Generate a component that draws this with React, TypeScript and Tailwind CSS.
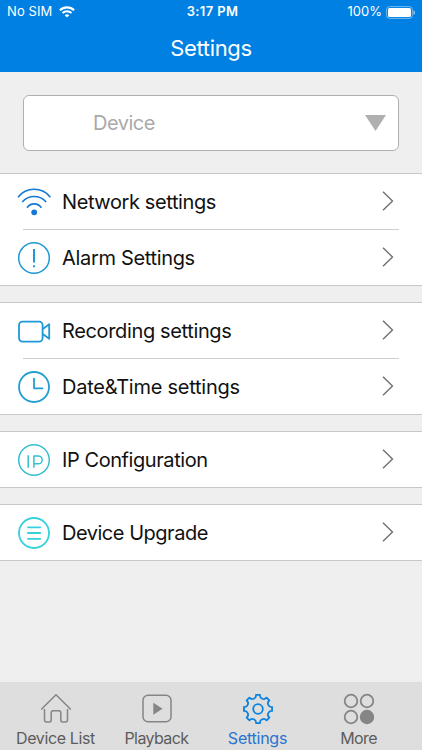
import type { ReactNode } from 'react';

const blue = '#0a82df';

function StatusBar() {
  return (
    <div className="flex h-6 items-center text-[13px] text-white">
      <div className="flex flex-1 items-center gap-[7px] pl-[7px]">
        <span className="tracking-[0.1px]">No SIM</span>
        <svg width="16" height="12" viewBox="0 0 16 12" fill="none" stroke="white" strokeWidth="2.1">
          <path d="M0.9 4.3a10.2 10.2 0 0 1 14.2 0" />
          <path d="M3.5 7a6.5 6.5 0 0 1 9 0" />
          <path d="M8 11.6L5.7 9.2a3.4 3.4 0 0 1 4.6 0Z" fill="white" stroke="none" />
        </svg>
      </div>
      <span className="ml-[3px] font-semibold tracking-[0.35px]">3:17 PM</span>
      <div className="flex flex-1 items-center justify-end gap-1 pr-[7px]">
        <span className="tracking-[0px]">100%</span>
        <svg width="29" height="13" viewBox="0 0 29 13">
          <rect x="0.6" y="0.6" width="25.8" height="11.8" rx="3" fill="none" stroke="white" strokeOpacity="0.45" />
          <rect x="2" y="2" width="23" height="9" rx="1.6" fill="white" />
          <path d="M27.4 4.5v4a2 2 0 0 0 0-4Z" fill="white" fillOpacity="0.5" />
        </svg>
      </div>
    </div>
  );
}

const icons: Record<string, ReactNode> = {
  network: (
    <g stroke="#1478d4" strokeWidth="1.6">
      <path d="M2 13.2a20.6 20.6 0 0 1 32.4 0" />
      <path d="M6.2 18a15.8 15.8 0 0 1 24 0" />
      <path d="M11 23.8a8.6 8.6 0 0 1 14.4 0" />
      <circle cx="18.2" cy="28.3" r="2.9" fill="#1478d4" stroke="none" />
    </g>
  ),
  alarm: (
    <g stroke="#2098d6">
      <circle cx="18" cy="18" r="15.3" />
      <path d="M18 9v13.6" strokeWidth="2" />
      <path d="M18 25.3v2" strokeWidth="2" />
    </g>
  ),
  recording: (
    <g stroke="#2099d9" strokeWidth="1.8">
      <rect x="3" y="8.6" width="23.6" height="20" rx="3.5" />
      <path d="M26.8 16L33.2 11.2v14.6l-6.4-4.8" />
    </g>
  ),
  date: (
    <g stroke="#229fd0" strokeWidth="1.8">
      <circle cx="18" cy="18" r="15" />
      <path d="M18 9v10.3h9.2" />
    </g>
  ),
  ip: (
    <g stroke="#34bfd2">
      <circle cx="18" cy="18" r="15.3" />
      <path d="M12.2 13.3v12.4M17.9 25.7V14h4.4a3.9 3.9 0 0 1 0 7.8h-4.4" />
    </g>
  ),
  upgrade: (
    <g stroke="#35d2db" strokeWidth="1.8">
      <circle cx="18" cy="18" r="15" />
      <path d="M11.3 12.3h13.6M11.3 18h13.6M11.3 23.8h13.6" />
    </g>
  ),
};

// Each inner list is one white block
const groups = [
  [
    { icon: 'network', label: 'Network settings', spacing: 'tracking-[-0.4px]' },
    { icon: 'alarm', label: 'Alarm Settings', spacing: 'tracking-[-0.33px]' },
  ],
  [
    { icon: 'recording', label: 'Recording settings', spacing: 'tracking-[-0.36px]' },
    { icon: 'date', label: 'Date&Time settings', spacing: 'tracking-[-0.25px]' },
  ],
  [{ icon: 'ip', label: 'IP Configuration', spacing: 'tracking-[-0.43px]' }],
  [{ icon: 'upgrade', label: 'Device Upgrade', spacing: 'tracking-[-0.48px]' }],
];

function Row({ icon, label, spacing }: { icon: string; label: string; spacing: string }) {
  return (
    <div className="flex h-[55px] items-center pl-4 pr-[28px]">
      <svg width="36" height="36" viewBox="0 0 36 36" fill="none" strokeWidth="1.5" strokeLinejoin="round">
        {icons[icon]}
      </svg>
      <span className={`ml-[10px] flex-1 text-[20px] leading-6 text-[#111] ${spacing}`}>{label}</span>
      <svg className="mb-px" width="12" height="20" viewBox="0 0 12 20" fill="none" stroke="#707070" strokeWidth="1.4">
        <path d="M1 0.7L10.5 10L1 19.3" />
      </svg>
    </div>
  );
}

// Eight teeth with a round notch between each pair
const gearPath = (() => {
  const at = (deg: number) => {
    const a = (deg * Math.PI) / 180;
    return `${(16 + 14.2 * Math.sin(a)).toFixed(2)} ${(16 - 14.2 * Math.cos(a)).toFixed(2)}`;
  };
  let d = `M${at(-8)}`;
  for (let i = 0; i < 8; i++) {
    d += `L${at(i * 45 + 8)}A3.7 3.7 0 0 0 ${at(i * 45 + 37)}`;
  }
  return `${d}Z`;
})();

const tabs = [
  {
    label: 'Device List',
    spacing: 'tracking-[-0.37px]',
    icon: (
      <path d="M1.2 16.5L16 1.7l14.8 14.8M4.5 16v10.7a2.3 2.3 0 0 0 2.3 2.3h2.4a2 2 0 0 0 2-2v-7.3a2 2 0 0 1 2-2h5.6a2 2 0 0 1 2 2V27a2 2 0 0 0 2 2h2.4a2.3 2.3 0 0 0 2.3-2.3V16" />
    ),
  },
  {
    label: 'Playback',
    spacing: 'tracking-[-0.6px]',
    icon: (
      <>
        <rect x="2" y="2.3" width="28" height="26.4" rx="5" />
        <path d="M12.3 9.8v12l9.2-6Z" fill="#858585" stroke="none" />
      </>
    ),
  },
  {
    label: 'Settings',
    spacing: 'tracking-[-0.25px]',
    active: true,
    icon: (
      <>
        <path d={gearPath} strokeWidth="1.8" />
        <circle cx="16" cy="16" r="4.8" strokeWidth="1.8" />
      </>
    ),
  },
  {
    label: 'More',
    spacing: 'tracking-[-0.6px]',
    icon: (
      <g strokeWidth="1.8">
        <circle cx="8" cy="8" r="6.3" />
        <circle cx="24" cy="8" r="6.3" />
        <circle cx="8" cy="24" r="6.3" />
        <circle cx="24" cy="24" r="6.3" fill="#858585" />
      </g>
    ),
  },
];

export default function App() {
  return (
    <div className="flex h-[750px] w-[422px] flex-col overflow-hidden bg-[#efefef] font-[Inter,sans-serif]">
      <header className="h-[72px] bg-[#0080e3]">
        <StatusBar />
        <h1 className="pt-2 text-center text-[22px] leading-8 tracking-[-0.35px] text-white">Settings</h1>
      </header>

      <div className="flex h-[101px] items-center px-[23px]">
        <button className="mt-px flex h-14 w-full items-center justify-between rounded-md border border-[#b0b0b0] bg-white pl-[69px] pr-3">
          <span className="text-[20px] tracking-[-0.5px] text-[#aaa]">Device</span>
          <svg width="21" height="16" viewBox="0 0 21 16" fill="#b0b0b0">
            <path d="M0 0h21L10.5 16Z" />
          </svg>
        </button>
      </div>

      <main className="flex flex-1 flex-col gap-4">
        {groups.map((rows, i) => (
          <section key={i} className="border-y border-[#c8c8c8] bg-white">
            {rows.map((row, j) => (
              <div key={row.label}>
                {j > 0 && <div className="mx-[23px] h-px bg-[#cfcfcf]" />}
                <Row {...row} />
              </div>
            ))}
          </section>
        ))}
      </main>

      <nav className="flex h-[68px] bg-[#dedede] px-[5px]">
        {tabs.map((tab) => (
          <div key={tab.label} className="flex w-[101px] flex-col items-center pt-[11px]">
            <svg
              width="32"
              height="32"
              viewBox="0 0 32 32"
              fill="none"
              stroke={tab.active ? blue : '#858585'}
              strokeWidth="1.5"
              strokeLinejoin="round"
            >
              {tab.icon}
            </svg>
            <span
              className={`mt-[3px] text-[16px] leading-5 whitespace-nowrap ${tab.spacing} ${tab.active ? 'text-[#2874d0]' : 'text-[#5c5c5c]'}`}
            >
              {tab.label}
            </span>
          </div>
        ))}
      </nav>
    </div>
  );
}
